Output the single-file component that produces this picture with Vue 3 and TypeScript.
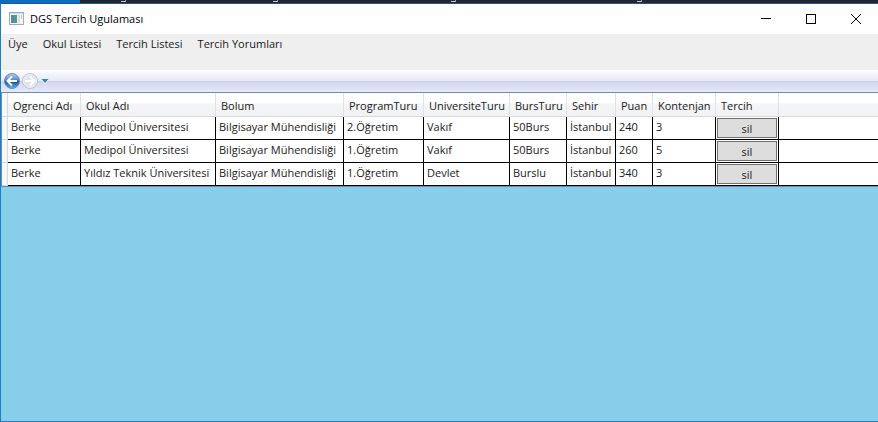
<script setup lang="ts">
interface Preference {
  student: string
  school: string
  department: string
  program: string
  university: string
  scholarship: string
  city: string
  score: number
  quota: number
}

const menuItems: string[] = ['Üye', 'Okul Listesi', 'Tercih Listesi', 'Tercih Yorumları']

const columns: { title: string; width: number }[] = [
  { title: 'Ogrenci Adı', width: 73 },
  { title: 'Okul Adı', width: 135 },
  { title: 'Bolum', width: 128 },
  { title: 'ProgramTuru', width: 80 },
  { title: 'UniversiteTuru', width: 86 },
  { title: 'BursTuru', width: 57 },
  { title: 'Sehir', width: 49 },
  { title: 'Puan', width: 37 },
  { title: 'Kontenjan', width: 63 },
  { title: 'Tercih', width: 63 },
]

const rows: Preference[] = [
  { student: 'Berke', school: 'Medipol Üniversitesi', department: 'Bilgisayar Mühendisliği', program: '2.Öğretim', university: 'Vakıf', scholarship: '50Burs', city: 'İstanbul', score: 240, quota: 3 },
  { student: 'Berke', school: 'Medipol Üniversitesi', department: 'Bilgisayar Mühendisliği', program: '1.Öğretim', university: 'Vakıf', scholarship: '50Burs', city: 'İstanbul', score: 260, quota: 5 },
  { student: 'Berke', school: 'Yıldız Teknik Üniversitesi', department: 'Bilgisayar Mühendisliği', program: '1.Öğretim', university: 'Devlet', scholarship: 'Burslu', city: 'İstanbul', score: 340, quota: 3 },
]
</script>

<template>
  <div class="desktop">
    <div class="backdrop" aria-hidden="true">
      <span class="backdrop-tab"></span>
      <span class="backdrop-mark first"></span>
      <span class="backdrop-mark second"></span>
      <span class="backdrop-mark third"></span>
      <span class="backdrop-mark fourth"></span>
    </div>
    <main class="window">
      <header class="title-bar">
        <svg class="app-icon" width="15" height="13" viewBox="0 0 15 13" aria-hidden="true">
          <rect x="0.5" y="0.5" width="14" height="12" fill="#f4f6f7" stroke="#a3abb2" />
          <rect x="1" y="1" width="13" height="1" fill="#d3dade" />
          <rect x="2" y="3" width="6" height="8" fill="#4d9a92" />
          <path d="M2 3h3v8H2z" fill="#5b8aa0" />
          <rect x="9" y="3" width="2" height="8" fill="#d7dcdd" />
          <rect x="12" y="3" width="1" height="4" fill="#a9cfc3" />
        </svg>
        <h1>DGS Tercih Ugulaması</h1>
        <div class="window-controls">
          <button type="button" aria-label="Simge durumuna küçült">
            <svg width="10" height="10" viewBox="0 0 10 10"><path d="M0 4.500h10" /></svg>
          </button>
          <button type="button" aria-label="Ekranı kapla">
            <svg width="10" height="10" viewBox="0 0 10 10"><rect x="0.5" y="0.5" width="9" height="9" /></svg>
          </button>
          <button type="button" aria-label="Kapat">
            <svg width="10" height="10" viewBox="0 0 10 10"><path d="M0 0l10 10M10 0L0 10" /></svg>
          </button>
        </div>
      </header>

      <nav class="menu">
        <button v-for="item in menuItems" :key="item" type="button">{{ item }}</button>
      </nav>

      <div class="navigation">
        <button type="button" aria-label="Geri">
          <svg width="18" height="18" viewBox="0 0 18 18">
            <defs>
              <linearGradient id="back-fill" x1="0" y1="0" x2="0" y2="1">
                <stop offset="0" stop-color="#b4cdf0" />
                <stop offset="0.45" stop-color="#5384cc" />
                <stop offset="0.55" stop-color="#1c4c9f" />
                <stop offset="1" stop-color="#55c0f2" />
              </linearGradient>
            </defs>
            <circle cx="9" cy="9" r="7.500" fill="url(#back-fill)" stroke="#6d8aba" />
            <path d="M14 9H5M9 4.500L4.500 9L9 13.500" fill="none" stroke="#fff" stroke-width="2" />
          </svg>
        </button>
        <button type="button" aria-label="İleri" disabled>
          <svg width="18" height="18" viewBox="0 0 18 18">
            <circle cx="9" cy="9" r="7.500" fill="#dfe3ee" stroke="#bcc2d2" />
            <circle cx="9" cy="9" r="6.500" fill="none" stroke="#eef0f7" />
            <path d="M4 9h9M9 4.500L13.500 9L9 13.500" fill="none" stroke="#fff" stroke-width="2" />
          </svg>
        </button>
        <button type="button" class="history" aria-label="Geçmiş">
          <svg width="8" height="6" viewBox="0 0 8 6">
            <path d="M1 2l3 3.500L7 2" fill="none" stroke="#fff" />
            <path d="M0.500 1h7L4 5z" fill="#2e86b8" />
          </svg>
        </button>
      </div>

      <section class="grid">
        <table>
          <colgroup>
            <col class="row-head-col" />
            <col v-for="column in columns" :key="column.title" :style="{ width: column.width + 'px' }" />
            <col />
          </colgroup>
          <thead>
            <tr>
              <td class="row-head"></td>
              <th v-for="column in columns" :key="column.title" scope="col">{{ column.title }}</th>
              <td class="filler"></td>
            </tr>
          </thead>
          <tbody>
            <tr v-for="(row, index) in rows" :key="index">
              <td class="row-head"></td>
              <td>{{ row.student }}</td>
              <td>{{ row.school }}</td>
              <td>{{ row.department }}</td>
              <td>{{ row.program }}</td>
              <td>{{ row.university }}</td>
              <td>{{ row.scholarship }}</td>
              <td>{{ row.city }}</td>
              <td>{{ row.score }}</td>
              <td>{{ row.quota }}</td>
              <td class="action"><button type="button">sil</button></td>
              <td class="filler"></td>
            </tr>
          </tbody>
        </table>
      </section>
    </main>
  </div>
</template>

<style>
body {
  margin: 0;
}
</style>

<style scoped>
* {
  box-sizing: border-box;
}

.desktop {
  display: flex;
  flex-direction: column;
  min-height: 100vh;
  color: #1a1a1a;
  font-family: "Open Sans", "Noto Sans", sans-serif;
  font-size: 11px;
  line-height: 16px;
}

button {
  padding: 0;
  border: 0;
  background: none;
  color: inherit;
  font: inherit;
}

svg {
  display: block;
}

.backdrop {
  position: relative;
  height: 3px;
  overflow: hidden;
  background: #22262f;
}

.backdrop-tab {
  display: block;
  width: 80px;
  height: 3px;
  background: #0a6ebd;
}

/* Lower edge of the text in the window behind */
.backdrop-mark {
  position: absolute;
  top: 0;
  width: 5px;
  height: 2px;
  border-right: 1px solid #9a9da3;
  border-bottom: 1px solid #c9cbcf;
}

.first {
  left: 121px;
}

.second {
  left: 273px;
}

.third {
  left: 451px;
}

.fourth {
  left: 637px;
}

.window {
  display: flex;
  flex: 1;
  flex-direction: column;
  border: 1px solid #1f7dc4;
  border-top-color: #1c5a90;
  border-right: 0;
  background: #87ceeb;
}

.title-bar {
  display: flex;
  align-items: center;
  height: 30px;
  padding-left: 8px;
  background: #fff;
  color: #000;
}

.app-icon {
  margin-bottom: 2px;
}

h1 {
  flex: 1;
  margin: 0 0 0 6px;
  font-size: 11px;
  font-weight: 400;
}

.window-controls {
  display: flex;
}

.window-controls button {
  display: flex;
  align-items: center;
  justify-content: center;
  width: 45px;
  height: 28px;
}

.window-controls svg {
  fill: none;
  stroke: #000;
}

.menu {
  display: flex;
  align-items: flex-start;
  gap: 15px;
  height: 36px;
  padding: 2px 7px;
  background: #efefef;
}

.navigation {
  display: flex;
  align-items: center;
  height: 22px;
  padding-left: 2px;
  background: linear-gradient(#fdfdff 0, #e5e9f5 50%, #d0d5ea 50%, #e5e9f8 100%);
}

.history {
  margin-left: 2px;
}

.grid {
  border: 1px solid #688caf;
  border-right: 0;
  background: #fff;
}

table {
  width: 100%;
  border-collapse: separate;
  border-spacing: 0;
  table-layout: fixed;
}

.row-head-col {
  width: 6px;
}

th,
td {
  height: 23px;
  padding: 0 0 2px 3px;
  border-right: 1px solid #000;
  border-bottom: 1px solid #000;
  font-weight: 400;
  text-align: left;
  white-space: nowrap;
}

thead th,
thead td {
  height: 24px;
  padding: 2px 0 0 5px;
  border-right-color: #e0e2e5;
  border-bottom-color: #d8dadd;
  background: linear-gradient(#fff 0, #fff 40%, #f4f5f6 50%, #f1f2f4 100%);
}

td.row-head {
  padding: 0;
  border-right-color: #d5d8dc;
  border-bottom-color: #d5d8dc;
  background: #f6f7f8;
}

td.filler {
  border-right: 0;
}

td.action {
  padding: 1px;
}

.action button {
  display: block;
  width: 100%;
  height: 20px;
  padding-top: 2px;
  border: 1px solid #707070;
  background: #ddd;
}
</style>
